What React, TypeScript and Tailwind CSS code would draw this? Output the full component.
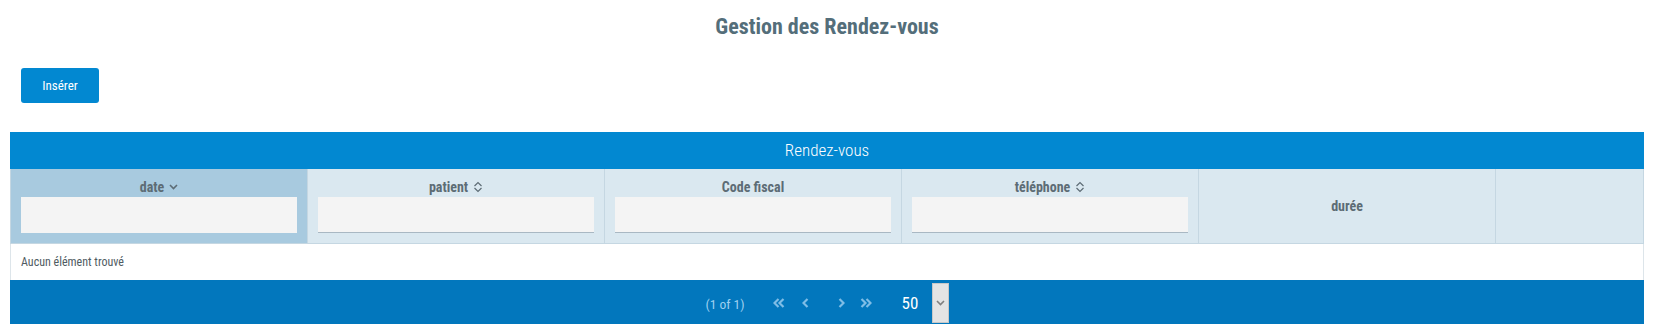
import React from "react";

const F = "font-[family-name:'Liberation_Sans_Narrow','Roboto_Condensed',Roboto,sans-serif]";

function ChevDown({ cls = "" }: { cls?: string }) {
  return (
    <svg width="9" height="6" viewBox="0 0 9 6" className={cls}>
      <path d="M1 1 L4.5 4.5 L8 1" fill="none" stroke="currentColor" strokeWidth="1.6" />
    </svg>
  );
}

function SortAlt() {
  return (
    <svg width="10" height="12" viewBox="0 0 10 12">
      <path d="M1.5 5 L5 1.5 L8.5 5 M1.5 7 L5 10.5 L8.5 7" fill="none" stroke="currentColor" strokeWidth="1.2" />
    </svg>
  );
}

function Header({ label, icon, active }: { label: string; icon?: "down" | "alt"; active?: boolean }) {
  return (
    <div
      className={`flex flex-col px-[10px] pt-[9px] pb-[10px] border-r border-[#c5d7e2] ${
        active ? "bg-[#a8cadf]" : "bg-[#dae8f0]"
      }`}
    >
      <div className="h-[18px] leading-[18px] flex items-center justify-center gap-[5px] text-[14px] font-bold text-[#5d6c75]">
        <span>{label}</span>
        {icon === "down" && <ChevDown />}
        {icon === "alt" && <SortAlt />}
      </div>
      <div
        className={`mt-[1px] h-[36px] bg-[#f4f4f4] ${active ? "" : "border-b border-[#a9b8c3]"}`}
      />
    </div>
  );
}

function DoubleChev({ dir }: { dir: "l" | "r" }) {
  return (
    <svg width="12" height="10" viewBox="0 0 12 10">
      {dir === "l" ? (
        <path d="M5.5 1 L1.5 5 L5.5 9 M10.5 1 L6.5 5 L10.5 9" fill="none" stroke="currentColor" strokeWidth="2.2" />
      ) : (
        <path d="M1.5 1 L5.5 5 L1.5 9 M6.5 1 L10.5 5 L6.5 9" fill="none" stroke="currentColor" strokeWidth="2.2" />
      )}
    </svg>
  );
}

function SingleChev({ dir }: { dir: "l" | "r" }) {
  return (
    <svg width="7" height="10" viewBox="0 0 7 10">
      {dir === "l" ? (
        <path d="M5.5 1 L1.5 5 L5.5 9" fill="none" stroke="currentColor" strokeWidth="2.2" />
      ) : (
        <path d="M1.5 1 L5.5 5 L1.5 9" fill="none" stroke="currentColor" strokeWidth="2.2" />
      )}
    </svg>
  );
}

export default function App() {
  return (
    <div className={`w-[1654px] h-[336px] bg-white ${F}`}>
      <h1 className="pt-[13px] text-center text-[22px] leading-[28px] font-bold text-[#546e7a]">
        Gestion des Rendez-vous
      </h1>
      <div className="mt-[27px] pl-[21px]">
        <button className="w-[78px] h-[35px] rounded-[3px] bg-[#0288d1] text-white text-[13px]">
          Insérer
        </button>
      </div>
      <div className="mx-[10px] mt-[29px]">
        <div className="h-[37px] bg-[#0288d1] flex items-center justify-center text-white text-[17px] font-light">
          Rendez-vous
        </div>
        <div className="grid grid-cols-[297px_297px_297px_297px_297px_1fr] border-l border-b border-[#c5d7e2]">
          <Header label="date" icon="down" active />
          <Header label="patient" icon="alt" />
          <Header label="Code fiscal" />
          <Header label="téléphone" icon="alt" />
          <div className="flex items-center justify-center bg-[#dae8f0] border-r border-[#c5d7e2] text-[14px] font-bold text-[#5d6c75]">
            durée
          </div>
          <div className="bg-[#dae8f0] border-r border-[#c5d7e2]" />
        </div>
        <div className="h-[36px] flex items-center px-[10px] border-l border-r border-[#dde5ea] text-[12px] text-[#4f5b62]">
          Aucun élément trouvé
        </div>
        <div className="h-[44px] bg-[#0277bd] flex items-center justify-center">
          <span className="whitespace-nowrap text-center text-[13.5px] text-[#9fd0f0] mt-[4px]">(1 of 1)</span>
          <span className="ml-[28px] text-[#7fbde6] mt-[2px]">
            <DoubleChev dir="l" />
          </span>
          <span className="ml-[17px] text-[#7fbde6] mt-[2px]">
            <SingleChev dir="l" />
          </span>
          <span className="ml-[29px] text-[#7fbde6] mt-[2px]">
            <SingleChev dir="r" />
          </span>
          <span className="ml-[15px] text-[#7fbde6] mt-[2px]">
            <DoubleChev dir="r" />
          </span>
          <span className="ml-[30px] w-[16px] text-[17px] text-white mt-[3px]">50</span>
          <span className="ml-[14px] w-[17px] h-[40px] mt-[1px] bg-[#e4e4e4] border border-[#c8c8c8] flex items-center justify-center text-[#808080]">
            <ChevDown />
          </span>
        </div>
      </div>
    </div>
  );
}
